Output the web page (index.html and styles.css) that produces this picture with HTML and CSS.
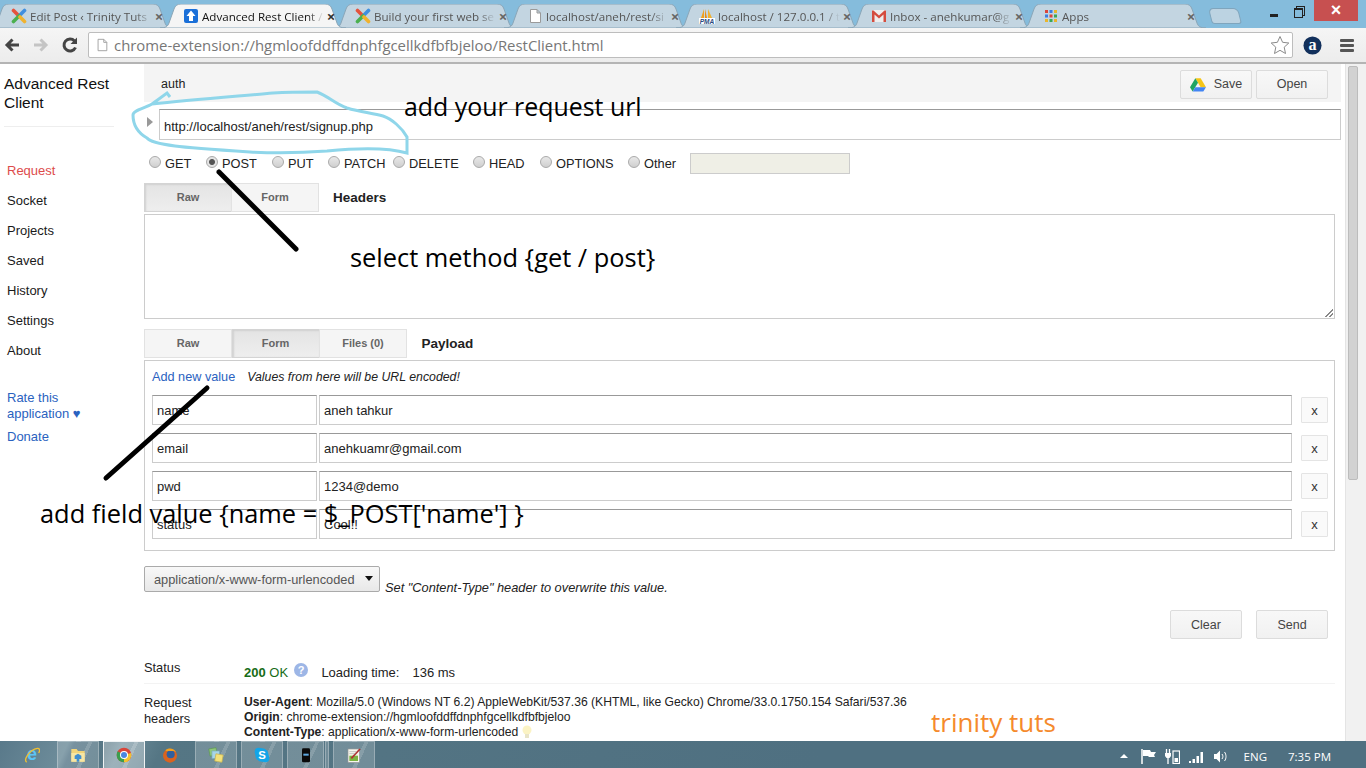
FILE: index.html
```html
<!DOCTYPE html>
<html lang="en">
<head>
  <meta charset="UTF-8">
  <title>Advanced Rest Client</title>
  <link rel="stylesheet" href="styles.css">
</head>
<body>
  <svg class="defs" width="0" height="0">
    <symbol id="tab-shape" viewBox="0 0 186 24" preserveAspectRatio="none">
      <path d="M0 24C6 24 8 22 9 19L14 5C15 2 17 0 21 0H165C169 0 171 2 172 5L177 19C178 22 180 24 186 24Z"/>
    </symbol>
    <symbol id="ico-tt" viewBox="0 0 16 16">
      <path d="M2.500 2.500L8 8" stroke="#e5533d" stroke-width="3.600" stroke-linecap="round"/>
      <path d="M13.500 2.500L8 8" stroke="#3f8fe0" stroke-width="3.600" stroke-linecap="round"/>
      <path d="M2.500 13.500L8 8" stroke="#4bb04f" stroke-width="3.600" stroke-linecap="round"/>
      <path d="M13.500 13.500L9 9" stroke="#f0b22e" stroke-width="3.600" stroke-linecap="round"/>
    </symbol>
    <symbol id="ico-doc" viewBox="0 0 16 16">
      <path d="M3.500 1.500H10L13.500 5V14.500H3.500Z M10 1.500V5H13.500" fill="#fff" stroke="#9a9a9a"/>
    </symbol>
  </svg>

  <!-- Browser tabs and toolbar -->
  <header class="browser">
    <div class="tabstrip">
      <div class="tab tab-first">
        <svg class="tab-bg"><use href="#tab-shape"/></svg>
        <svg class="favicon"><use href="#ico-tt"/></svg>
        <span class="tab-title">Edit Post ‹ Trinity Tuts</span><span class="tab-x">×</span>
      </div>
      <div class="tab tab-active">
        <svg class="tab-bg"><use href="#tab-shape"/></svg>
        <svg class="favicon" viewBox="0 0 16 16"><rect x="1" y="1" width="14" height="14" rx="2" fill="#1a6fd8"/><path d="M8 2.500L12.500 8H10V13H6V8H3.500Z" fill="#fff"/></svg>
        <span class="tab-title">Advanced Rest Client /</span><span class="tab-x">×</span>
      </div>
      <div class="tab">
        <svg class="tab-bg"><use href="#tab-shape"/></svg>
        <svg class="favicon"><use href="#ico-tt"/></svg>
        <span class="tab-title">Build your first web se</span><span class="tab-x">×</span>
      </div>
      <div class="tab">
        <svg class="tab-bg"><use href="#tab-shape"/></svg>
        <svg class="favicon"><use href="#ico-doc"/></svg>
        <span class="tab-title">localhost/aneh/rest/si</span><span class="tab-x">×</span>
      </div>
      <div class="tab">
        <svg class="tab-bg"><use href="#tab-shape"/></svg>
        <svg class="favicon" viewBox="0 0 16 16"><path d="M2 10L5 1V10Z" fill="#f0a020"/><path d="M6 10V1L8 10Z" fill="#e98a10"/><path d="M9 1L13 10H9Z" fill="#f0b030"/><rect x="0" y="10" width="16" height="6" fill="#fff"/><text x="8" y="15.500" text-anchor="middle" class="pma-text">PMA</text></svg>
        <span class="tab-title">localhost / 127.0.0.1 / t</span><span class="tab-x">×</span>
      </div>
      <div class="tab">
        <svg class="tab-bg"><use href="#tab-shape"/></svg>
        <svg class="favicon" viewBox="0 0 16 16"><rect x="1" y="2" width="14" height="12" fill="#eee"/><path d="M1 14V2.500H2.500L8 7.500L13.500 2.500H15V14H12.500V6.500L8 10.500L3.500 6.500V14Z" fill="#d44c3e"/></svg>
        <span class="tab-title">Inbox - anehkumar@g</span><span class="tab-x">×</span>
      </div>
      <div class="tab">
        <svg class="tab-bg"><use href="#tab-shape"/></svg>
        <svg class="favicon" viewBox="0 0 16 16">
          <rect x="2" y="2" width="3" height="3" fill="#d9453a"/><rect x="6.500" y="2" width="3" height="3" fill="#3d7de0"/><rect x="11" y="2" width="3" height="3" fill="#e9b52c"/>
          <rect x="2" y="6.500" width="3" height="3" fill="#3d7de0"/><rect x="6.500" y="6.500" width="3" height="3" fill="#d9453a"/><rect x="11" y="6.500" width="3" height="3" fill="#3aa757"/>
          <rect x="2" y="11" width="3" height="3" fill="#e9b52c"/><rect x="6.500" y="11" width="3" height="3" fill="#3aa757"/><rect x="11" y="11" width="3" height="3" fill="#e9b52c"/>
        </svg>
        <span class="tab-title">Apps</span><span class="tab-x">×</span>
      </div>
      <div class="tab-new"></div>
      <div class="win-controls">
        <span class="win-min"></span>
        <span class="win-max"></span>
        <span class="win-close">×</span>
      </div>
    </div>
    <div class="toolbar">
      <svg class="nav-ico" viewBox="0 0 18 18"><path d="M16 9H5 M9.500 3.500L4 9L9.500 14.500" fill="none" stroke="#444" stroke-width="3"/></svg>
      <svg class="nav-ico" viewBox="0 0 18 18"><path d="M2 9H13 M8.500 3.500L14 9L8.500 14.500" fill="none" stroke="#c4c4c4" stroke-width="3"/></svg>
      <svg class="nav-ico" viewBox="0 0 18 18"><path d="M14.500 11.500A6 6 0 1 1 13.500 5" fill="none" stroke="#444" stroke-width="3"/><path d="M16 1.500V8H9.500Z" fill="#444"/></svg>
      <div class="omnibox">
        <svg class="omni-doc"><use href="#ico-doc"/></svg>
        <span class="omni-url">chrome-extension://hgmloofddffdnphfgcellkdfbfbjeloo/RestClient.html</span>
        <svg class="omni-star" viewBox="0 0 20 20"><path d="M10 1.500L12.600 7.300L18.800 8L14.200 12.200L15.500 18.500L10 15.300L4.500 18.500L5.800 12.200L1.200 8L7.400 7.300Z" fill="#fff" stroke="#8a8a8a"/></svg>
      </div>
      <svg class="amazon-ico" viewBox="0 0 20 20"><circle cx="10" cy="10" r="9.500" fill="#12305c"/><text x="10" y="15" text-anchor="middle" class="amazon-a">a</text></svg>
      <div class="menu-ico"><span></span><span></span><span></span></div>
    </div>
  </header>

  <!-- Extension page -->
  <div class="page">
    <nav class="sidebar">
      <div class="app-name">Advanced Rest Client</div>
      <ul class="nav-list">
        <li class="current">Request</li>
        <li>Socket</li>
        <li>Projects</li>
        <li>Saved</li>
        <li>History</li>
        <li>Settings</li>
        <li>About</li>
      </ul>
      <a class="side-link rate">Rate this application ♥</a>
      <a class="side-link">Donate</a>
    </nav>

    <main class="content">
      <div class="title-bar">
        <span class="req-name">auth</span>
        <div class="title-actions">
          <button class="btn">
            <svg class="drive-ico" viewBox="0 0 18 16"><path d="M6 1H12L18 11H12Z" fill="#f5c518"/><path d="M6 1L0 11L3 16L9 6Z" fill="#1fa463"/><path d="M3 16H15L18 11H6Z" fill="#4285f4"/></svg>
            Save
          </button>
          <button class="btn">Open</button>
        </div>
      </div>

      <div class="url-row">
        <span class="url-toggle"></span>
        <div class="url-input">http://localhost/aneh/rest/signup.php</div>
      </div>

      <div class="methods">
        <label class="method m-get"><i class="radio"></i>GET</label>
        <label class="method m-post"><i class="radio on"></i>POST</label>
        <label class="method m-put"><i class="radio"></i>PUT</label>
        <label class="method m-patch"><i class="radio"></i>PATCH</label>
        <label class="method m-delete"><i class="radio"></i>DELETE</label>
        <label class="method m-head"><i class="radio"></i>HEAD</label>
        <label class="method m-options"><i class="radio"></i>OPTIONS</label>
        <label class="method m-other"><i class="radio"></i>Other</label>
        <div class="other-box"></div>
      </div>

      <div class="tabs-row">
        <div class="seg">
          <span class="seg-item on">Raw</span>
          <span class="seg-item">Form</span>
        </div>
        <span class="tabs-label">Headers</span>
      </div>
      <div class="headers-box"><span class="resize-grip"></span></div>

      <div class="tabs-row tabs-payload">
        <div class="seg">
          <span class="seg-item">Raw</span>
          <span class="seg-item on">Form</span>
          <span class="seg-item">Files (0)</span>
        </div>
        <span class="tabs-label">Payload</span>
      </div>
      <section class="payload">
        <div class="payload-top">
          <a class="add-value">Add new value</a>
          <em class="payload-note">Values from here will be URL encoded!</em>
        </div>
        <div class="field-row">
          <div class="field field-name">name</div><div class="field field-value">aneh tahkur</div><button class="btn-x">x</button>
        </div>
        <div class="field-row">
          <div class="field field-name">email</div><div class="field field-value">anehkuamr@gmail.com</div><button class="btn-x">x</button>
        </div>
        <div class="field-row">
          <div class="field field-name">pwd</div><div class="field field-value">1234@demo</div><button class="btn-x">x</button>
        </div>
        <div class="field-row">
          <div class="field field-name">status</div><div class="field field-value">Cool!!</div><button class="btn-x">x</button>
        </div>
      </section>

      <div class="type-row">
        <div class="type-select">application/x-www-form-urlencoded<span class="caret"></span></div>
        <em class="type-note">Set "Content-Type" header to overwrite this value.</em>
      </div>

      <div class="send-row">
        <button class="btn">Clear</button>
        <button class="btn">Send</button>
      </div>

      <div class="result-row status-row">
        <div class="result-key">Status</div>
        <div class="result-val">
          <b class="code">200</b> <span class="code">OK</span>
          <svg class="help-ico" viewBox="0 0 14 14"><circle cx="7" cy="7" r="7" fill="#9db6e6"/><text x="7" y="11" text-anchor="middle" class="help-q">?</text></svg>
          <span class="load-time">Loading time:</span><span class="load-ms">136 ms</span>
        </div>
      </div>
      <div class="result-row headers-row">
        <div class="result-key">Request headers</div>
        <div class="result-val">
          <div><b>User-Agent</b>: Mozilla/5.0 (Windows NT 6.2) AppleWebKit/537.36 (KHTML, like Gecko) Chrome/33.0.1750.154 Safari/537.36</div>
          <div><b>Origin</b>: chrome-extension://hgmloofddffdnphfgcellkdfbfbjeloo</div>
          <div><b>Content-Type</b>: application/x-www-form-urlencoded
            <svg class="bulb-ico" viewBox="0 0 10 14"><circle cx="5" cy="5" r="4.500" fill="#fbf3c4"/><rect x="3" y="9" width="4" height="4" fill="#e8e4c8"/></svg>
          </div>
        </div>
      </div>
    </main>

    <div class="scrollbar"><span class="scroll-thumb"></span></div>
  </div>

  <!-- Windows taskbar -->
  <footer class="taskbar">
    <div class="task-item plain">
      <svg class="task-ico" viewBox="0 0 24 24"><text x="12" y="20" text-anchor="middle" class="ie-e">e</text><path d="M4 23C-1 19 8 4 20 2C24 1.500 24 6 22 9" fill="none" stroke="#f0c030" stroke-width="2"/></svg>
    </div>
    <div class="task-item">
      <svg class="task-ico" viewBox="0 0 24 24"><path d="M2 3H10L12 6H22V22H2Z" fill="#f2d479"/><rect x="2" y="9" width="20" height="13" fill="#f7e6a4"/><path d="M7 18V13L12 10L17 13V18H14V22H10V18Z" fill="#3f8ed0"/></svg>
    </div>
    <div class="task-item active">
      <svg class="task-ico" viewBox="0 0 24 24"><circle cx="12" cy="12" r="11" fill="#d9453a"/><path d="M12 12L22.500 9A11 11 0 0 1 12 23Z" fill="#f2c230"/><path d="M12 12L12 23A11 11 0 0 1 2.500 6.500Z" fill="#3a9e4e"/><circle cx="12" cy="12" r="6" fill="#fff"/><circle cx="12" cy="12" r="4.500" fill="#4a86e0"/></svg>
    </div>
    <div class="task-item plain">
      <svg class="task-ico" viewBox="0 0 24 24"><circle cx="12" cy="13" r="10.500" fill="#d9631f"/><circle cx="13" cy="11" r="6" fill="#2f5f9e"/><path d="M5 5C9 1 18 1 21 8C18 5 15 6 12 6C9 6 7 7 5 5Z" fill="#f0a020"/></svg>
    </div>
    <div class="task-item">
      <svg class="task-ico" viewBox="0 0 24 24"><rect x="2" y="2" width="11" height="11" fill="#8fc67a" stroke="#5f9a55" transform="rotate(-10 7 7)"/><rect x="6" y="6" width="11" height="11" fill="#a8d6e8" stroke="#7ab0c4"/><rect x="11" y="11" width="11" height="11" fill="#f4e27a" stroke="#c4b050" transform="rotate(10 16 16)"/></svg>
    </div>
    <div class="task-item">
      <svg class="task-ico" viewBox="0 0 24 24"><circle cx="7" cy="7" r="6" fill="#12a5e8"/><circle cx="17" cy="17" r="6" fill="#12a5e8"/><circle cx="12" cy="12" r="10" fill="#12a5e8"/><text x="12" y="18" text-anchor="middle" class="skype-s">S</text></svg>
    </div>
    <div class="task-item narrow">
      <svg class="task-ico" viewBox="0 0 24 24"><rect x="6" y="2" width="12" height="21" rx="2" fill="#0a0a0a"/><rect x="8" y="10" width="8" height="3" fill="#5da8e0"/></svg>
    </div>
    <div class="task-sliver"></div>
    <div class="task-item">
      <svg class="task-ico" viewBox="0 0 24 24"><rect x="3" y="3" width="17" height="20" fill="#f6f6ee" stroke="#999"/><rect x="5" y="13" width="13" height="8" fill="#7cb342"/><path d="M8 17L21 3" stroke="#b03030" stroke-width="2.500"/><path d="M5 7H16 M5 10H14" stroke="#aaa"/></svg>
    </div>
    <div class="tray">
      <span class="tray-up"></span>
      <svg class="tray-ico" viewBox="0 0 15 15"><path d="M1 0V15" stroke="#fff" stroke-width="1.500"/><path d="M2 1H9L10 3H15L13 6L14 8H8L7 7H2Z" fill="#fff"/></svg>
      <svg class="tray-ico" viewBox="0 0 15 15"><path d="M1.500 0V4 M4.500 0V4 M3 9V15" stroke="#fff" stroke-width="1.300"/><path d="M0 4H6V7L4.500 9H1.500L0 7Z" fill="#fff"/><rect x="8" y="2" width="6.500" height="12.500" fill="none" stroke="#fff" stroke-width="1.200"/><rect x="9.500" y="9" width="3.500" height="4" fill="#fff"/></svg>
      <svg class="tray-ico" viewBox="0 0 15 15"><path d="M0 12H2V14H0Z M3.500 10H6V14H3.500Z M7.500 7H10V14H7.500Z M11.500 3H14V14H11.500Z" fill="#fff"/></svg>
      <svg class="tray-ico" viewBox="0 0 15 15"><path d="M1 5H3.500L7 1.500V13.500L3.500 10H1Z" fill="#fff"/><path d="M9 5C10.200 6.700 10.200 8.300 9 10 M11.500 3C13.500 5.500 13.500 9.500 11.500 12" fill="none" stroke="#fff"/></svg>
      <span class="tray-lang">ENG</span>
      <span class="tray-time">7:35 PM</span>
    </div>
  </footer>

  <!-- Hand drawn notes on top of the screenshot -->
  <svg class="scribble" viewBox="0 0 1366 768">
    <path class="ink-blue" d="M170 97L167 93L152 104C190 100 240 96 273 93C290 92 305 92 317 92C328 96 335 104 347 108C360 112 372 113 383 116C392 119 402 128 407 137L407 153C390 148 366 147 327 151C300 153 270 153 250 152C220 150 190 148 175 146C160 144 150 142 147 138C140 134 133 128 133 115C133 110 146 108 152 104"/>
    <path class="ink-black" d="M219 172L296 249"/>
    <path class="ink-black" d="M207 388L106 478"/>
  </svg>
  <div class="note note-url">add your request url</div>
  <div class="note note-method">select method {get / post}</div>
  <div class="note note-field">add field value {name = $_POST['name'] }</div>
  <div class="note note-brand">trinity tuts</div>
</body>
</html>
```

FILE: styles.css
```css
/* General reset and layout */
* {
  margin: 0;
  padding: 0;
  box-sizing: border-box;
}
html, body {
  height: 768px;
  overflow: hidden;
}
body {
  position: relative;
  display: flex;
  flex-direction: column;
  font-family: 'Liberation Sans', Arial, sans-serif;
  font-size: 12px;
  color: #222;
  background-color: #fff;
}
.defs {
  position: absolute;
}
button {
  font-family: inherit;
}

/* Browser tabs */
.browser {
  flex: none;
  height: 64px;
}
.tabstrip {
  position: relative;
  display: flex;
  height: 28px;
  padding-top: 4px;
  background-color: #85bcdc;
}
.tab {
  position: relative;
  flex: none;
  width: 186px;
  height: 24px;
  margin-right: -14px;
  display: flex;
  align-items: center;
  padding: 0 8px 0 23px;
  font-family: 'Open Sans', sans-serif;
  font-size: 11.600px;
  color: #555;
  fill: #c3d5e1;
  stroke: #8aa6b8;
}
.tab-first {
  margin-left: -12px;
}
.tab-active {
  z-index: 2;
  color: #111;
  fill: #f5f5f5;
}
.tab-bg {
  position: absolute;
  left: 0;
  top: 0;
  width: 100%;
  height: 100%;
}
.favicon {
  position: relative;
  flex: none;
  width: 16px;
  height: 16px;
  margin-right: 3px;
  stroke: none;
  fill: none;
}
.pma-text {
  font-family: 'Liberation Sans', sans-serif;
  font-size: 6.500px;
  font-weight: bold;
  font-style: italic;
  fill: #2a4a80;
}
.tab-title {
  position: relative;
  flex: 1;
  min-width: 0;
  overflow: hidden;
  white-space: nowrap;
  -webkit-mask-image: linear-gradient(90deg, #000 86%, transparent);
  mask-image: linear-gradient(90deg, #000 86%, transparent);
}
.tab-x {
  position: relative;
  flex: none;
  width: 14px;
  text-align: center;
  font-size: 15px;
  font-weight: bold;
  color: #666;
}
.tab-active .tab-x {
  color: #333;
}
.tab-new {
  flex: none;
  width: 30px;
  height: 16px;
  margin: 4px 0 0 18px;
  background-color: #bcd3e2;
  border: 1px solid #7fa5bd;
  border-radius: 5px 5px 3px 3px;
  transform: skewX(14deg);
}
.win-controls {
  margin-left: auto;
  margin-top: -4px;
  margin-right: 8px;
  display: flex;
  align-items: flex-start;
}
.win-min {
  width: 8px;
  height: 3px;
  margin: 14px 16px 0 0;
  background-color: #222;
}
.win-max {
  width: 9px;
  height: 10px;
  margin: 8px 11px 0 0;
  border: 1px solid #222;
  border-top-width: 2px;
  background-color: #85bcdc;
  box-shadow: 2px -2px 0 -1px #85bcdc, 2px -2px 0 0 #222;
}
.win-close {
  width: 44px;
  height: 21px;
  background-color: #c75050;
  color: #fff;
  font-size: 18px;
  font-weight: bold;
  line-height: 20px;
  text-align: center;
}

/* Browser toolbar */
.toolbar {
  display: flex;
  align-items: center;
  height: 36px;
  padding-left: 3px;
  background: linear-gradient(#f5f5f5, #ececec);
  border-bottom: 2px solid #b4b4b4;
}
.nav-ico {
  flex: none;
  width: 18px;
  height: 18px;
  margin-right: 11px;
}
.omnibox {
  flex: 1;
  display: flex;
  align-items: center;
  height: 26px;
  margin-left: -2px;
  padding-left: 6px;
  background-color: #fff;
  border: 1px solid #bdbdbd;
  border-radius: 2px;
}
.omni-doc {
  flex: none;
  width: 14px;
  height: 16px;
  margin-right: 5px;
}
.omni-url {
  flex: 1;
  font-family: 'Open Sans', sans-serif;
  font-size: 14.900px;
  color: #777;
  white-space: nowrap;
}
.omni-star {
  flex: none;
  width: 20px;
  height: 20px;
  margin-right: 2px;
}
.amazon-ico {
  flex: none;
  width: 19px;
  height: 19px;
  margin: 0 18px 0 10px;
}
.amazon-a {
  font-family: 'Liberation Serif', serif;
  font-size: 17px;
  font-weight: bold;
  fill: #fff;
}
.menu-ico {
  flex: none;
  width: 14px;
  margin-right: 12px;
  display: flex;
  flex-direction: column;
  gap: 2px;
}
.menu-ico span {
  height: 3px;
  background-color: #555;
  border-radius: 1px;
}

/* Extension page */
.page {
  flex: 1;
  display: flex;
  min-height: 0;
  overflow: hidden;
}
.sidebar {
  flex: none;
  width: 144px;
  padding: 10px 30px 0 4px;
}
.app-name {
  font-size: 15.500px;
  line-height: 19px;
  color: #111;
  padding-bottom: 14px;
  border-bottom: 1px solid #eee;
}
.nav-list {
  list-style: none;
  margin: 29px 0 24px 3px;
}
.nav-list li {
  font-size: 13px;
  line-height: 30px;
  color: #1a1a1a;
}
.nav-list li.current {
  color: #dd4b4b;
}
.side-link {
  display: block;
  margin-left: 3px;
  font-size: 13px;
  line-height: 16px;
  color: #2a62c0;
}
.rate {
  margin-bottom: 7px;
}
.content {
  flex: 1;
  min-width: 0;
  height: 800px;
}

/* Title bar and url */
.title-bar {
  display: flex;
  align-items: center;
  justify-content: space-between;
  height: 38px;
  margin-right: 4px;
  padding: 2px 13px 0 17px;
  background-color: #f4f4f4;
}
.req-name {
  font-size: 12.500px;
}
.title-actions {
  display: flex;
  gap: 4px;
}
.btn {
  display: inline-flex;
  align-items: center;
  justify-content: center;
  width: 72px;
  height: 29px;
  font-size: 12.500px;
  color: #444;
  background: linear-gradient(#f8f8f8, #f1f1f1);
  border: 1px solid #dcdcdc;
  border-radius: 2px;
}
.drive-ico {
  width: 16px;
  height: 15px;
  margin-right: 8px;
}
.url-row {
  display: flex;
  align-items: center;
  margin: 7px 4px 0 0;
}
.url-toggle {
  flex: none;
  width: 0;
  height: 0;
  margin: -6px 6px 0 3px;
  border-left: 6px solid #999;
  border-top: 5px solid transparent;
  border-bottom: 5px solid transparent;
}
.url-input {
  flex: 1;
  height: 31px;
  padding: 0 4px;
  line-height: 33px;
  font-size: 13px;
  border: 1px solid #ccc;
  border-top-color: #999;
}

/* Method radios */
.methods {
  display: flex;
  align-items: center;
  height: 24px;
  margin-top: 11px;
  padding-left: 5px;
}
.method {
  display: flex;
  align-items: center;
  padding-top: 1px;
  font-size: 12.800px;
  color: #222;
}
.radio {
  flex: none;
  width: 12px;
  height: 12px;
  margin-right: 4px;
  margin-top: -3px;
  border: 1px solid #aaa;
  border-radius: 50%;
  background: linear-gradient(#e8e8e8, #cfcfcf);
}
.radio.on {
  background: radial-gradient(circle, #555 0 2.500px, #e4e4e4 3.500px);
}
.m-get { width: 57px; }
.m-post { width: 66px; }
.m-put { width: 56px; }
.m-patch { width: 65px; }
.m-delete { width: 80px; }
.m-head { width: 67px; }
.m-options { width: 88px; }
.m-other { width: 62px; }
.other-box {
  width: 160px;
  height: 21px;
  background-color: #efefe6;
  border: 1px solid #ccc;
}

/* Raw / Form switches */
.tabs-row {
  display: flex;
  align-items: center;
  margin-top: 8px;
}
.tabs-payload {
  margin-top: 10px;
}
.seg {
  display: flex;
}
.seg-item {
  width: 88px;
  height: 29px;
  line-height: 26px;
  text-align: center;
  font-size: 11px;
  font-weight: bold;
  color: #666;
  background-color: #f5f5f5;
  border: 1px solid #e2e2e2;
  margin-right: -1px;
}
.tabs-payload .seg-item {
  margin-right: -0.500px;
}
.seg-item.on {
  background: linear-gradient(#e4e4e4, #eee);
  border-color: #d4d4d4;
  box-shadow: inset 1px 1px 2px #d0d0d0;
}
.tabs-label {
  margin-left: 15px;
  font-size: 13.500px;
  font-weight: bold;
  color: #222;
}
.headers-box {
  position: relative;
  height: 105px;
  margin: 2px 10px 0 0;
  border: 1px solid #ccc;
}
.resize-grip {
  position: absolute;
  right: 1px;
  bottom: 1px;
  width: 8px;
  height: 8px;
  background: linear-gradient(135deg, transparent 50%, #888 50% 60%, transparent 60% 75%, #888 75% 85%, transparent 85%);
}

/* Payload form */
.payload {
  height: 191px;
  margin: 2px 10px 0 0;
  padding: 8px 0 0 7px;
  border: 1px solid #ccc;
}
.payload-top {
  display: flex;
  align-items: center;
  height: 16px;
  margin-bottom: 10px;
}
.add-value {
  font-size: 12.700px;
  color: #2a62c0;
}
.payload-note {
  margin-left: 12px;
  font-size: 12.300px;
  color: #222;
}
.field-row {
  display: flex;
  align-items: center;
  height: 30px;
  margin-bottom: 8px;
}
.field {
  height: 30px;
  padding: 0 4px;
  line-height: 30px;
  font-size: 13px;
  color: #222;
  border: 1px solid #ccc;
  border-top-color: #999;
}
.field-name {
  flex: none;
  width: 165px;
  margin-right: 2px;
}
.field-value {
  flex: 1;
}
.btn-x {
  flex: none;
  width: 27px;
  height: 26px;
  margin: 0 6px 0 9px;
  font-size: 13px;
  color: #333;
  background-color: #fafafa;
  border: 1px solid #e4e4e4;
  border-radius: 1px;
}

/* Content type */
.type-row {
  display: flex;
  align-items: flex-end;
  margin-top: 15px;
}
.type-select {
  position: relative;
  width: 236px;
  height: 26px;
  padding-left: 9px;
  line-height: 25px;
  font-size: 12.800px;
  color: #555;
  background: linear-gradient(#f8f8f8, #e8e8e8);
  border: 1px solid #aaa;
  border-radius: 2px;
}
.caret {
  position: absolute;
  right: 6px;
  top: 9px;
  border-top: 5px solid #111;
  border-left: 4px solid transparent;
  border-right: 4px solid transparent;
}
.type-note {
  margin: 0 0 -3px 5px;
  font-size: 12.800px;
}
.send-row {
  display: flex;
  justify-content: flex-end;
  gap: 14px;
  margin: 18px 17px 0 0;
}

/* Response */
.result-row {
  display: flex;
  font-size: 12.150px;
  line-height: 15px;
}
.result-key {
  flex: none;
  width: 100px;
  font-size: 12.800px;
}
.status-row {
  margin: 21px 10px 0 0;
  height: 24px;
  border-bottom: 1px solid #f3f3f3;
}
.status-row .result-val {
  padding-top: 3px;
  font-size: 13px;
}
.code {
  color: #176c17;
}
.help-ico {
  width: 14px;
  height: 14px;
  margin-left: 2px;
  vertical-align: 0;
}
.help-q {
  font-size: 11px;
  font-weight: bold;
  fill: #fff;
}
.load-time {
  margin-left: 10px;
}
.load-ms {
  margin-left: 13px;
}
.headers-row {
  margin-top: 11px;
}
.headers-row .result-key {
  padding-right: 40px;
  line-height: 16px;
}
.bulb-ico {
  width: 10px;
  height: 14px;
  vertical-align: -3px;
}
.scrollbar {
  flex: none;
  width: 21px;
  padding: 2px 8px 0 2px;
  background-color: #f1f1f1;
  border-left: 1px solid #e4e4e4;
}
.scroll-thumb {
  display: block;
  height: 414px;
  background-color: #d2d2d2;
  border: 1px solid #bcbcbc;
  border-radius: 2px;
}

/* Windows taskbar */
.taskbar {
  position: relative;
  z-index: 3;
  flex: none;
  display: flex;
  align-items: stretch;
  height: 27px;
  padding-left: 11px;
  background: linear-gradient(115deg, #59798a 0, #6d8c9a 5%, #59798a 5.500%, #567684 8%, #6a8a98 9%, #557684 12%, #4f7081 60%);
}
.task-item {
  flex: none;
  width: 42px;
  margin-right: 4px;
  display: flex;
  align-items: center;
  justify-content: center;
  background: linear-gradient(115deg, rgba(255, 255, 255, 0.18) 0 58%, rgba(255, 255, 255, 0.3) 58% 66%, rgba(255, 255, 255, 0.18) 66%);
  border: 1px solid rgba(255, 255, 255, 0.28);
  border-bottom: none;
}
.task-item.plain {
  background: none;
  border-color: transparent;
}
.task-item.active {
  background: linear-gradient(115deg, rgba(255, 255, 255, 0.34) 0 58%, rgba(255, 255, 255, 0.46) 58% 66%, rgba(255, 255, 255, 0.34) 66%);
  border-color: rgba(255, 255, 255, 0.85);
}
.task-item.narrow {
  width: 37px;
  margin-right: 1px;
}
.task-sliver {
  flex: none;
  width: 4px;
  margin-right: 4px;
  background-color: rgba(255, 255, 255, 0.18);
  border: 1px solid rgba(255, 255, 255, 0.28);
  border-bottom: none;
}
.task-ico {
  width: 16px;
  height: 16px;
}
.ie-e {
  font-family: 'Liberation Sans', sans-serif;
  font-size: 27px;
  font-weight: bold;
  fill: #5cc4f6;
}
.skype-s {
  font-family: 'Liberation Sans', sans-serif;
  font-size: 17px;
  font-weight: bold;
  fill: #fff;
}
.tray {
  margin-left: auto;
  display: flex;
  align-items: center;
  padding: 3px 35px 0 0;
  color: #fff;
  font-family: 'Open Sans', sans-serif;
  font-size: 11.500px;
}
.tray-up {
  margin-right: 13px;
  border-bottom: 4px solid #fff;
  border-left: 4px solid transparent;
  border-right: 4px solid transparent;
}
.tray-ico {
  width: 15px;
  height: 15px;
  margin-right: 9px;
}
.tray-lang {
  margin: 0 21px 0 7px;
}

/* Hand drawn notes */
.scribble {
  position: absolute;
  left: 0;
  top: 0;
  width: 1366px;
  height: 768px;
  pointer-events: none;
}
.ink-blue {
  fill: none;
  stroke: #8fd6ea;
  stroke-width: 3;
}
.ink-black {
  fill: none;
  stroke: #000;
  stroke-width: 5;
  stroke-linecap: round;
}
.note {
  position: absolute;
  font-family: 'Open Sans', sans-serif;
  font-size: 25.400px;
  line-height: 30px;
  color: #000;
  white-space: nowrap;
}
.note-url { left: 404px; top: 91px; font-size: 24.900px; }
.note-method { left: 350px; top: 242px; }
.note-field { left: 40px; top: 498px; }
.note-brand { left: 931px; top: 707px; font-size: 26px; color: #f58a2c; }
```
